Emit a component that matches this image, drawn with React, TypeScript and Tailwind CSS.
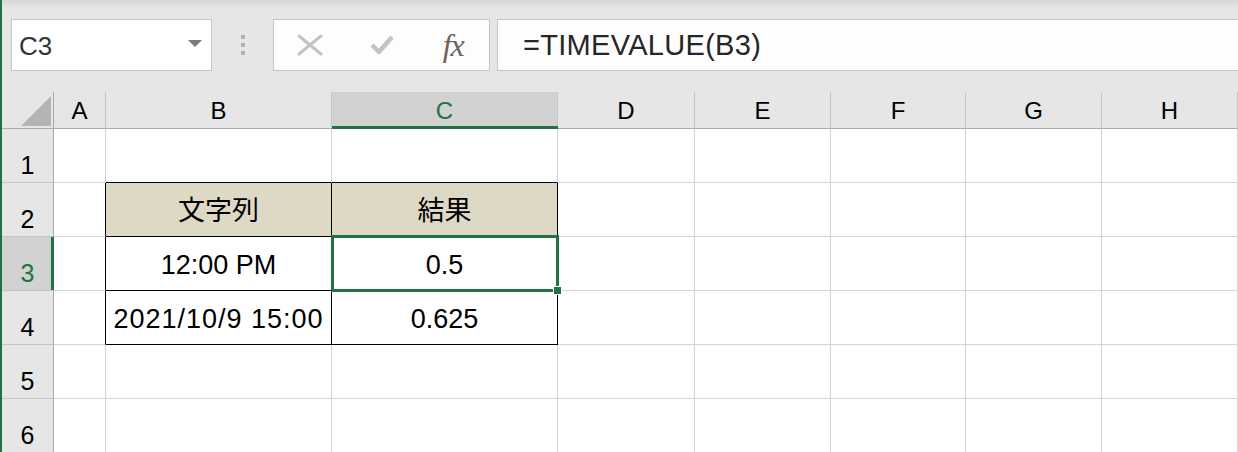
import { Fragment } from 'react';

const columns = ['A', 'B', 'C', 'D', 'E', 'F', 'G', 'H'];
const rows = [1, 2, 3, 4, 5, 6];

// cell contents keyed by address
const values: Record<string, string> = {
  B2: '文字列',
  C2: '結果',
  B3: '12:00 PM',
  C3: '0.5',
  B4: '2021/10/9 15:00',
  C4: '0.625',
};

const inTable = (col: string) => col === 'B' || col === 'C';

function Cell({ col, row }: { col: string; row: number }) {
  const key = `${col}${row}`;
  const value = values[key];
  const header = inTable(col) && row === 2;
  const rightBlack = (col === 'A' || inTable(col)) && row >= 2 && row <= 4;
  const bottomBlack = inTable(col) && row >= 1 && row <= 4;
  const selected = key === 'C3';

  return (
    <div
      className={`relative flex items-center justify-center pt-[4px] border-r border-b ${
        rightBlack ? 'border-r-black' : 'border-r-[#d4d4d4]'
      } ${bottomBlack ? 'border-b-black' : 'border-b-[#d4d4d4]'} ${
        header ? 'bg-[#ddd9c4]' : 'bg-white'
      } ${selected ? 'z-10' : ''}`}
    >
      {value && (
        <span className={`text-black whitespace-nowrap text-[27px] ${key === 'B4' ? 'tracking-[1px]' : ''}`}>
          {value}
        </span>
      )}
      {selected && (
        <div className="absolute -left-[1px] -top-[2px] -right-[2px] -bottom-[2px] border-[3px] border-[#217346]">
          <div className="absolute -right-[6px] -bottom-[6px] w-[9px] h-[9px] bg-[#217346] border border-white" />
        </div>
      )}
    </div>
  );
}

function FormulaBar() {
  return (
    <div className="relative h-[92px] pl-[9px] pt-[19px] flex items-start bg-[#e6e6e6]">
      <div className="absolute left-0 right-0 top-0 h-[8px] bg-gradient-to-b from-[#d6d6d6] to-[#e6e6e6]" />
      <div className="relative w-[201px] h-[52px] bg-white border border-[#c6c6c6] flex items-center pl-[7px]">
        <span className="text-[26px] text-[#333] pt-[3px]">C3</span>
        <svg className="absolute left-[176px] top-[20px]" width="14" height="8" viewBox="0 0 14 8">
          <polygon points="0,0 14,0 7,7" fill="#7b7b7b" />
        </svg>
      </div>
      <div className="w-[61px] h-[52px] flex flex-col items-center justify-center gap-[4px]">
        <div className="w-[4px] h-[4px] bg-[#b3b3b3]" />
        <div className="w-[4px] h-[4px] bg-[#b3b3b3]" />
        <div className="w-[4px] h-[4px] bg-[#b3b3b3]" />
      </div>
      <div className="w-[217px] h-[52px] bg-[#fdfdfd] border border-[#c6c6c6] flex">
        <div className="w-[72px] flex items-center justify-center">
          <svg width="26" height="22" viewBox="0 0 26 22">
            <path d="M2 2 L24 20 M24 2 L2 20" stroke="#c3c3c3" strokeWidth="3" strokeLinecap="round" />
          </svg>
        </div>
        <div className="w-[72px] flex items-center justify-center">
          <svg width="26" height="22" viewBox="0 0 26 22">
            <path d="M3 11 L10 18 L23 3" fill="none" stroke="#c3c3c3" strokeWidth="4.5" strokeLinejoin="round" />
          </svg>
        </div>
        <div className="w-[72px] flex items-center justify-center">
          <span className="text-[32px] italic text-[#6e6259] font-['Liberation_Serif',serif] tracking-[-1px]">
            fx
          </span>
        </div>
      </div>
      <div className="ml-[7px] flex-1 h-[52px] bg-[#fdfdfd] border border-r-0 border-[#c6c6c6] flex items-center pl-[25px]">
        <span className="text-[29px] text-[#262626] pt-[2px] tracking-[0.3px]">=TIMEVALUE(B3)</span>
      </div>
    </div>
  );
}

export default function App() {
  return (
    <div className="w-[1238px] h-[452px] overflow-hidden bg-[#e6e6e6] border-l-2 border-[#217346] font-['Liberation_Sans','Noto_Sans_CJK_JP',sans-serif]">
      <FormulaBar />
      <div className="grid grid-cols-[52px_52px_226px_226px_137px_136px_135px_136px_136px] grid-rows-[37px_repeat(6,54px)]">
        {/* corner */}
        <div className="relative bg-[#e6e6e6] border-r border-b border-r-[#ababab] border-b-[#ababab]">
          <svg className="absolute right-[2px] bottom-[2px]" width="30" height="30" viewBox="0 0 30 30">
            <polygon points="30,0 30,30 0,30" fill="#b4b4b4" />
          </svg>
        </div>
        {columns.map((col) => (
          <div
            key={col}
            className={`relative flex items-center justify-center pt-[2px] border-r border-b border-r-[#c4c4c4] border-b-[#ababab] text-[24px] ${
              col === 'C' ? 'bg-[#d2d2d2] text-[#217346]' : 'bg-[#e6e6e6] text-black'
            }`}
          >
            {col}
            {col === 'C' && <div className="absolute left-0 -right-[1px] -bottom-[1px] h-[3px] bg-[#217346]" />}
          </div>
        ))}
        {rows.map((row) => (
          <Fragment key={row}>
            <div
              className={`relative flex items-end justify-center pb-[4px] leading-none border-r border-b border-r-[#ababab] border-b-[#c4c4c4] text-[25px] ${
                row === 3 ? 'bg-[#d2d2d2] text-[#217346]' : 'bg-[#e6e6e6] text-black'
              }`}
            >
              {row}
              {row === 3 && <div className="absolute -right-[1px] top-0 bottom-0 w-[3px] bg-[#217346]" />}
            </div>
            {columns.map((col) => (
              <Cell key={col} col={col} row={row} />
            ))}
          </Fragment>
        ))}
      </div>
    </div>
  );
}
